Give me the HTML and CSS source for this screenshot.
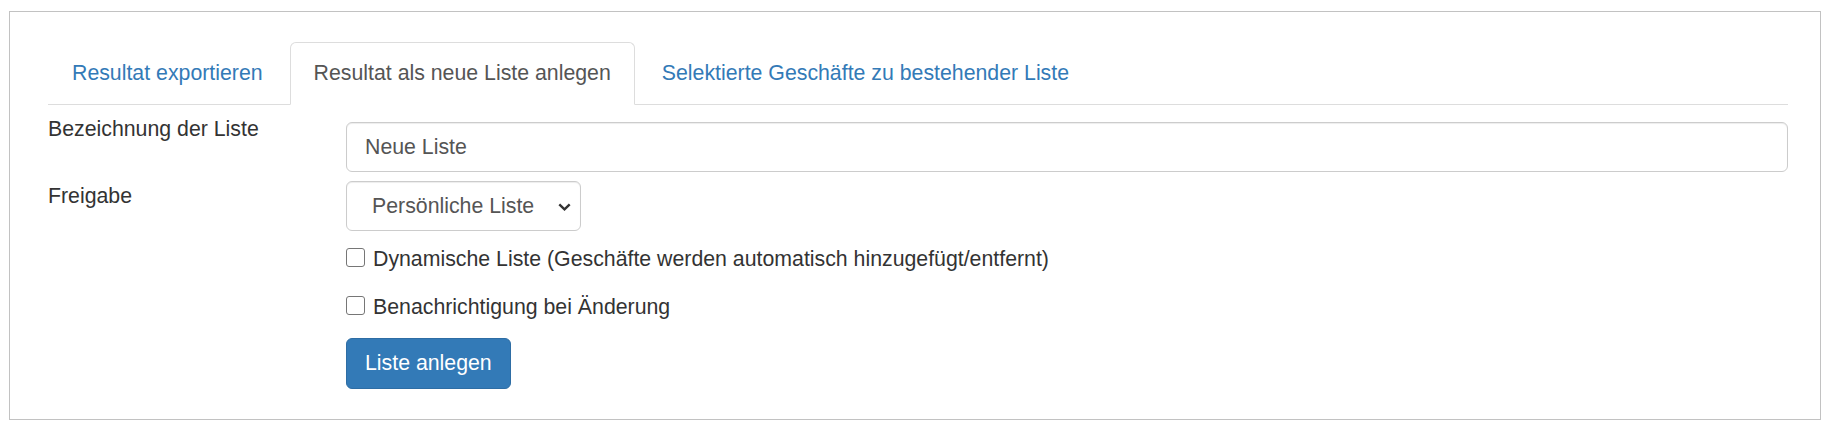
FILE: index.html
```html
<!DOCTYPE html>
<html lang="de">
<head>
    <meta charset="UTF-8">
    <meta name="viewport" content="width=device-width, initial-scale=1.0">
    <title>Resultat als neue Liste anlegen</title>
    <link rel="stylesheet" href="styles.css">
</head>
<body>
    <div class="panel">
        <ul class="tabs">
            <li class="tab"><a href="#">Resultat exportieren</a></li>
            <li class="tab active"><a href="#">Resultat als neue Liste anlegen</a></li>
            <li class="tab"><a href="#">Selektierte Geschäfte zu bestehender Liste</a></li>
        </ul>

        <form class="list-form">
            <div class="form-row first">
                <label class="row-label" for="list-name">Bezeichnung der Liste</label>
                <input class="text-input" id="list-name" type="text" value="Neue Liste">
            </div>
            <div class="form-row">
                <label class="row-label" for="share">Freigabe</label>
                <div class="select-wrap">
                    <select class="select-input" id="share">
                        <option>Persönliche Liste</option>
                        <option>Öffentliche Liste</option>
                    </select>
                    <!-- Pfeil des Auswahlfelds -->
                    <svg class="select-arrow" width="13" height="8" viewBox="0 0 13 8">
                        <path d="M1.3 1.3 L6.5 6.3 L11.7 1.3" fill="none" stroke="#333" stroke-width="2.4"/>
                    </svg>
                </div>
            </div>
            <div class="controls">
                <label class="check check-dynamic">
                    <input type="checkbox"> Dynamische Liste (Geschäfte werden automatisch hinzugefügt/entfernt)
                </label>
                <label class="check check-notify">
                    <input type="checkbox"> Benachrichtigung bei Änderung
                </label>
                <button class="btn-primary" type="button">Liste anlegen</button>
            </div>
        </form>
    </div>
</body>
</html>
```

FILE: styles.css
```css
body {
    margin: 0;
    background-color: #fff;
    color: #333;
    font-family: "Liberation Sans", Arial, sans-serif;
    font-size: 21.3px;
    line-height: 30px;
}
.panel {
    margin: 11px 9px;
    border: 1px solid #c2c2c2;
    padding: 30px 32px 30px 38px;
}

/* Reiter */
.tabs {
    display: flex;
    margin: 0;
    padding: 0;
    list-style: none;
    border-bottom: 1px solid #ddd;
}
.tab {
    margin-right: 3px;
    margin-bottom: -1px;
}
.tab a {
    display: block;
    padding: 15px 23px 16px;
    border: 1px solid transparent;
    border-radius: 6px 6px 0 0;
    color: #337ab7;
    text-decoration: none;
}
.tab.active a {
    color: #555;
    background-color: #fff;
    border-color: #ddd;
    border-bottom-color: transparent;
}

/* Formular */
.form-row {
    display: grid;
    grid-template-columns: 298px 1fr;
    margin-top: 9px;
}
.row-label {
    display: block;
}
.text-input {
    box-sizing: border-box;
    height: 50px;
    margin-top: 8px;
    padding: 0 18px;
    border: 1px solid #ccc;
    border-radius: 6px;
    box-shadow: inset 0 1px 1px rgba(0, 0, 0, .075);
    font-family: inherit;
    font-size: 21.3px;
    color: #555;
}
.select-wrap {
    position: relative;
    width: 235px;
}
.select-input {
    box-sizing: border-box;
    width: 235px;
    height: 50px;
    padding: 0 40px 0 25px;
    border: 1px solid #ccc;
    border-radius: 6px;
    background-color: #fff;
    box-shadow: inset 0 1px 1px rgba(0, 0, 0, .075);
    font-family: inherit;
    font-size: 21.3px;
    color: #555;
    appearance: none;
    -webkit-appearance: none;
}
.select-arrow {
    position: absolute;
    top: 22px;
    right: 10px;
    pointer-events: none;
}
.controls {
    margin-left: 298px;
}
.check {
    display: flex;
    align-items: center;
}
.check input {
    box-sizing: border-box;
    width: 19px;
    height: 19px;
    margin: -3px 8px 0 0;
    border: 1.5px solid #767676;
    border-radius: 3px;
    background-color: #fff;
    appearance: none;
    -webkit-appearance: none;
}
.check-dynamic {
    margin-top: 13px;
}
.check-notify {
    margin-top: 18px;
}
.btn-primary {
    display: block;
    height: 51px;
    margin-top: 16px;
    padding: 0 18px;
    border: 1px solid #2e6da4;
    border-radius: 6px;
    background-color: #337ab7;
    color: #fff;
    font-family: inherit;
    font-size: 21.3px;
}
```
